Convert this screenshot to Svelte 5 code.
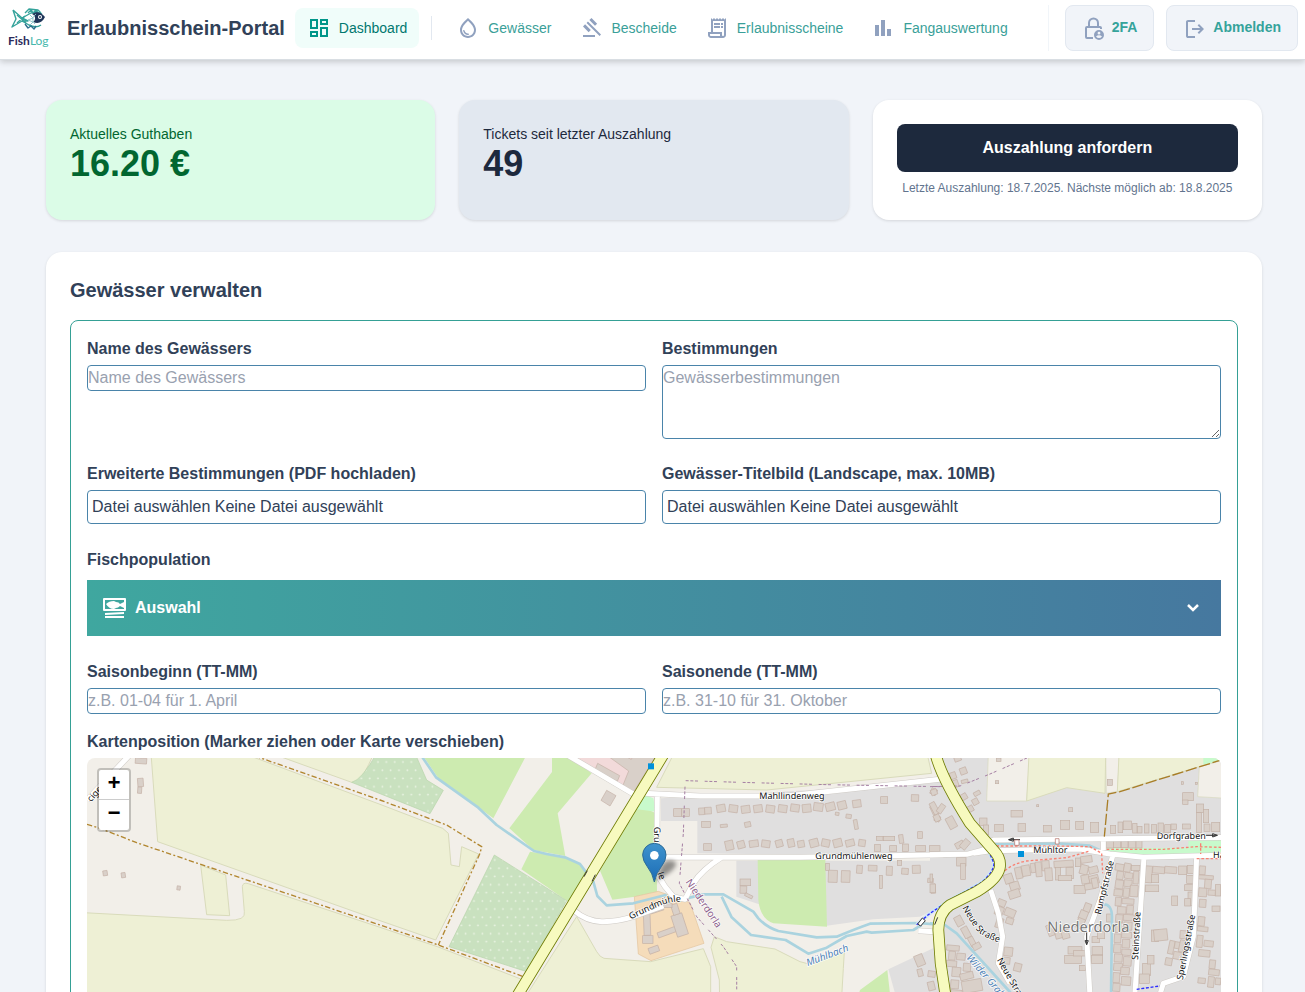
<!-- ------------------------------------------------------------
     APP.SVELTE — Erlaubnisschein-Portal, Dashboard
     Purpose: top navigation → balance cards → water body form + map
------------------------------------------------------------- -->

<script>
  const navItems = [
    {
      label: "Gewässer",
      icon: "M12 2c-5.33 4.55-8 8.48-8 11.8 0 4.98 3.8 8.2 8 8.2s8-3.22 8-8.2c0-3.32-2.67-7.25-8-11.8zm0 18c-3.35 0-6-2.57-6-6.2 0-2.34 1.95-5.44 6-9.14 4.05 3.7 6 6.79 6 9.14 0 3.63-2.65 6.2-6 6.2zm-4.17-6c.37 0 .67.26.74.62.41 2.22 2.28 2.98 3.64 2.87.43-.02.79.32.79.75 0 .4-.32.73-.72.75-2.13.13-4.62-1.09-5.19-4.12-.08-.45.28-.87.74-.87z"
    },
    {
      label: "Bescheide",
      icon: "M4 21v-2h12v2zm5.65-4.85L4 10.5l2.1-2.15L11.8 14zM16 9.8l-5.65-5.7L12.5 2l5.65 5.65zM20.6 20L7.55 6.95l1.4-1.4L22 18.6z"
    },
    {
      label: "Erlaubnisscheine",
      icon: "M19.5 3.5L18 2l-1.5 1.5L15 2l-1.5 1.5L12 2l-1.5 1.5L9 2 7.5 3.5 6 2v14H3v3c0 1.66 1.34 3 3 3h12c1.66 0 3-1.34 3-3V2l-1.5 1.5zM15 20H6c-.55 0-1-.45-1-1v-1h10v2zm4-1c0 .55-.45 1-1 1s-1-.45-1-1v-3H8V5h11v14zM9 7h6v2H9zm7 0h2v2h-2zm-7 3h6v2H9zm7 0h2v2h-2z"
    },
    {
      label: "Fangauswertung",
      icon: "M4 9h4v11H4zm12 4h4v7h-4zm-6-9h4v16h-4z"
    }
  ];

  // map sheets, west to east: offset of each one inside the drawing
  const west = "translate(-21 -24)";
  const mid = "translate(879 -24)";
  const center = "translate(1659 -24)";
  const east = "translate(2529 -24)";

  // houses: x, y, width, height, rotation
  const housesWest = [
    [166, 24, 34, 17, 4], [173, 85, 17, 25, -4], [173, 111, 12, 19, 4],
    [69, 362, 13, 15, -8], [124, 368, 12, 15, -8], [291, 408, 10, 12, 8]
  ];

  const housesCenter = [
    [101, 176, 24, 23, 0], [125, 176, 23, 23, 0], [176, 174, 18, 20, -3], [194, 172, 20, 20, -3],
    [230, 164, 26, 22, -10], [267, 165, 26, 22, 8], [304, 167, 26, 22, -8], [341, 165, 26, 22, -8],
    [378, 166, 26, 22, 8], [415, 165, 26, 22, 8], [452, 163, 26, 22, 8], [487, 163, 26, 24, -6],
    [521, 159, 28, 24, 8], [557, 158, 28, 24, -14], [593, 154, 26, 24, -14], [638, 150, 25, 22, -8],
    [722, 140, 21, 20, 0], [814, 134, 22, 20, 2], [872, 116, 18, 18, 25], [874, 166, 16, 28, -25],
    [884, 198, 16, 16, 20], [185, 214, 26, 18, 0], [241, 223, 21, 9, -5], [314, 216, 18, 15, -12],
    [586, 187, 11, 9, 10], [618, 193, 16, 12, 8], [642, 209, 11, 29, -10], [191, 281, 23, 20, 0],
    [256, 272, 24, 28, -12], [292, 273, 22, 22, -15], [328, 271, 27, 20, -8], [365, 271, 25, 21, 8],
    [407, 270, 21, 21, -15], [443, 267, 20, 24, -12], [473, 272, 20, 20, -10], [509, 267, 26, 24, -15],
    [545, 268, 24, 22, 12], [580, 267, 26, 24, -14], [617, 269, 26, 20, -14], [656, 269, 20, 20, 8],
    [709, 259, 20, 12, 0], [730, 259, 34, 13, 0], [777, 254, 13, 26, -8], [833, 245, 14, 20, 0],
    [703, 284, 19, 20, 0], [749, 287, 21, 17, 0], [787, 282, 18, 22, 0], [827, 287, 30, 17, 0],
    [868, 287, 32, 17, 0], [557, 340, 11, 21, 0], [565, 361, 27, 36, 2], [604, 362, 26, 35, 2],
    [650, 346, 17, 24, 4], [685, 346, 26, 17, 2], [739, 349, 18, 27, 2], [772, 331, 13, 15, 0],
    [785, 355, 20, 18, 4], [817, 346, 24, 24, -2], [718, 376, 9, 39, 0], [863, 385, 17, 13, 4],
    [872, 402, 14, 28, -4], [300, 387, 32, 20, 0], [300, 408, 20, 22, 2], [314, 433, 24, 9, 26],
    [826, 614, 26, 34, -22], [833, 657, 15, 22, -14], [864, 663, 22, 18, 8], [864, 695, 20, 26, -14],
    [11, 480, 20, 76, -2], [8, 557, 31, 23, 0], [26, 590, 31, 18, -20], [52, 538, 60, 16, -20],
    [102, 492, 34, 66, -18], [96, 462, 20, 32, -18], [30, 468, 40, 18, -18], [64, 459, 32, 14, 0]
  ];

  const housesEast = [
    [60, 67, 18, 20, -20], [90, 53, 20, 20, -20], [63, 91, 22, 22, -20], [94, 89, 20, 10, -14],
    [72, 14, 20, 20, -20], [3, 118, 18, 17, -20], [93, 131, 18, 18, -30],
    [131, 124, 20, 12, -28], [127, 146, 18, 18, -28], [110, 168, 20, 18, -28], [5, 156, 17, 38, -28],
    [25, 162, 16, 28, 35], [12, 194, 18, 20, -25], [52, 200, 24, 36, -28], [149, 204, 22, 22, 0],
    [160, 225, 16, 30, 0], [194, 223, 26, 22, 0], [243, 181, 34, 20, 0], [264, 221, 23, 23, 0],
    [320, 164, 6, 6, 0], [340, 226, 24, 20, 0], [391, 211, 28, 27, 0], [416, 173, 12, 12, 0],
    [437, 214, 24, 24, 0], [481, 217, 25, 30, 0], [199, 24, 14, 10, 0], [196, 92, 10, 9, 0],
    [532, 88, 15, 18, 0], [541, 226, 16, 24, 0], [564, 216, 14, 32, 0], [580, 213, 24, 26, 0],
    [608, 220, 13, 29, 0], [622, 229, 14, 20, 0], [643, 222, 14, 27, 0], [664, 224, 16, 25, 0],
    [684, 219, 16, 30, 0], [704, 224, 18, 24, 0], [723, 222, 16, 16, 0], [757, 222, 24, 15, 0],
    [758, 128, 32, 24, 0], [758, 150, 16, 13, 0], [754, 95, 6, 8, 0], [796, 97, 6, 6, 0],
    [799, 162, 22, 26, 0], [800, 188, 14, 60, 0], [820, 178, 16, 40, 0], [822, 222, 18, 22, 0],
    [845, 217, 24, 28, 0], [528, 270, 22, 24, 0], [550, 272, 22, 21, 0], [574, 272, 20, 21, 0],
    [596, 270, 22, 24, 0], [618, 270, 18, 24, 0], [76, 275, 26, 18, -28], [95, 268, 20, 30, 40],
    [80, 322, 28, 26, 0], [92, 340, 14, 48, 0], [0, 372, 8, 24, 0], [0, 402, 16, 26, 0],
    [223, 372, 26, 28, -18], [240, 396, 28, 26, -18], [236, 420, 34, 24, -18], [256, 352, 20, 34, -12],
    [276, 346, 24, 32, -10], [302, 340, 14, 28, -8], [317, 336, 18, 44, -5], [336, 332, 22, 30, -4],
    [345, 354, 22, 38, -4], [372, 332, 58, 20, -4], [376, 352, 16, 38, 0], [408, 352, 22, 34, 0],
    [385, 376, 40, 16, 0], [436, 324, 16, 26, 0], [452, 318, 34, 20, -8], [450, 345, 24, 28, 15],
    [476, 350, 28, 20, -14], [454, 375, 24, 26, -10], [478, 376, 28, 26, -14], [432, 406, 34, 24, 0],
    [464, 400, 32, 18, -10], [486, 384, 18, 30, -12], [462, 460, 20, 26, 20], [448, 482, 24, 28, 22],
    [440, 505, 22, 30, 22], [376, 545, 24, 20, -15], [395, 538, 22, 28, -15], [352, 524, 18, 34, -20],
    [556, 342, 26, 20, 10], [582, 340, 20, 26, 10], [604, 346, 26, 16, 0], [560, 364, 20, 24, 8],
    [584, 368, 24, 18, 8], [610, 364, 16, 38, 4], [556, 390, 24, 26, 8], [582, 390, 24, 20, 6],
    [552, 418, 26, 20, 6], [580, 414, 18, 28, 6], [600, 406, 24, 34, 4], [556, 442, 18, 26, 4],
    [576, 446, 36, 16, 4], [562, 470, 26, 22, 4], [590, 466, 20, 26, 4], [557, 494, 22, 22, 4],
    [580, 494, 36, 18, 4], [556, 518, 24, 30, 4], [582, 516, 24, 24, 4], [553, 552, 20, 26, 4],
    [575, 546, 30, 18, 4], [577, 568, 22, 26, 4], [551, 582, 22, 26, 4], [575, 598, 28, 18, 4],
    [553, 612, 24, 24, 4], [580, 620, 24, 28, 4], [551, 640, 26, 22, 4], [549, 668, 20, 30, 4],
    [572, 652, 26, 22, 4], [574, 680, 28, 26, 4], [548, 700, 22, 24, 4], [646, 348, 20, 50, 4],
    [668, 350, 36, 20, 4], [704, 350, 36, 20, 4], [746, 348, 24, 26, 0], [772, 346, 20, 24, 0],
    [646, 405, 40, 20, 0], [664, 374, 22, 24, 0], [770, 376, 20, 24, 0], [764, 404, 26, 18, 0],
    [774, 426, 14, 40, 0], [764, 446, 18, 22, 0], [725, 438, 18, 28, 0], [664, 540, 22, 34, 0],
    [672, 538, 40, 34, -6], [638, 640, 24, 36, 0], [628, 672, 30, 28, 0], [652, 616, 20, 26, 0],
    [716, 572, 16, 40, 12], [734, 576, 18, 20, 10], [750, 542, 22, 24, 4], [748, 570, 14, 36, 12],
    [730, 606, 26, 22, 12], [706, 624, 20, 22, 10], [808, 348, 18, 26, 4], [806, 376, 44, 12, 4],
    [824, 388, 20, 28, 4], [806, 414, 24, 26, 4], [834, 420, 22, 16, 4], [808, 448, 20, 24, 4],
    [846, 468, 24, 16, 0], [856, 404, 16, 34, 0], [804, 500, 20, 28, 6], [802, 530, 32, 14, 6],
    [800, 556, 18, 36, 6], [822, 572, 28, 18, 6], [806, 600, 34, 20, 6], [838, 630, 18, 26, 6],
    [836, 658, 32, 18, 6], [834, 680, 18, 32, 6], [804, 684, 22, 16, 6], [856, 684, 16, 20, 6],
    [203, 449, 24, 20, 22], [196, 470, 24, 26, 22], [224, 476, 32, 24, 22], [198, 504, 20, 30, 18],
    [228, 504, 22, 18, 18], [222, 592, 26, 26, 6], [216, 622, 24, 20, 6], [252, 640, 22, 24, 14],
    [76, 498, 22, 30, -28], [98, 530, 20, 34, -28], [118, 560, 16, 30, -28], [128, 580, 24, 18, -28],
    [50, 586, 38, 16, 5], [56, 604, 20, 26, 5], [80, 610, 26, 20, 5], [48, 632, 32, 18, 5],
    [66, 652, 26, 28, 5], [100, 640, 22, 24, 5], [90, 668, 40, 20, -14], [96, 690, 60, 36, -10],
    [62, 690, 24, 26, 5], [62, 720, 34, 20, 5], [414, 590, 42, 22, 0], [404, 616, 50, 24, 0],
    [430, 602, 36, 16, 0], [486, 590, 32, 24, 0], [484, 616, 34, 24, 0], [448, 646, 18, 16, 0],
    [486, 560, 22, 18, 0], [502, 544, 22, 22, 0], [530, 492, 14, 24, 0]
  ];

  let species = false;

  // file pickers show the chosen name beside the button text
  let pdfName = "Keine Datei ausgewählt";
  let imageName = "Keine Datei ausgewählt";

  function pickedName(e) {
    return e.target.files[0]?.name ?? "Keine Datei ausgewählt";
  }
</script>

{#snippet houses(list)}
  {#each list as [x, y, w, h, r]}
    <rect {x} {y} width={w} height={h} transform={`rotate(${r} ${x + w / 2} ${y + h / 2})`} />
  {/each}
{/snippet}

<header class="topbar">
  <a class="logo" href="#home" aria-label="FishLog">
    <svg viewBox="0 0 44 46">
      <g fill="none" stroke="#35a39b" stroke-width="1.4" stroke-linejoin="round">
        <path d="M5 5l9 8 9-5c4-1 8-1 11 1M5 5l3 9-4 8 10-6 7 4c4 2 9 2 12 0" />
        <path d="M14 13l6 3-6 0M9 10l9 8M9 18l8-7" />
        <path d="M17 8l4-4 9 1 3 3M20 8l3-3 2 3 3-3 2 3" />
        <path d="M17 19l3 4 3-2 3 3 2-3" stroke="#2b6f8d" />
      </g>
      <path d="M24 9c5-3 9-2 13 3-3 6-7 7-12 5 3-2 3-6-1-8z" fill="#1f3559" />
      <path d="M28 9c-4 3-4 7-1 10M22 10l3 3-5 2 5 2-3 3" fill="none" stroke="#8ec7cb" stroke-width="1" />
      <circle cx="32" cy="12" r="2" fill="#fff" />
      <circle cx="32" cy="12" r="1" fill="#1f3559" />
      <text x="0" y="40" class="brand">Fish<tspan>Log</tspan></text>
    </svg>
  </a>
  <h1>Erlaubnisschein-Portal</h1>

  <nav>
    <a class="nav-item active" href="#dashboard">
      <svg class="icon" viewBox="0 0 24 24"><path d="M19 5v2h-4V5h4M9 5v6H5V5h4m10 8v6h-4v-6h4M9 17v2H5v-2h4M21 3h-8v6h8V3zM11 3H3v10h8V3zm10 8h-8v10h8V11zm-10 4H3v6h8v-6z" /></svg>
      Dashboard
    </a>
    <span class="separator"></span>
    {#each navItems as item}
      <a class="nav-item" href="#{item.label.toLowerCase()}">
        <svg class="icon" viewBox="0 0 24 24"><path d={item.icon} /></svg>
        {item.label}
      </a>
    {/each}
  </nav>

  <div class="account">
    <button type="button">
      <svg class="icon" viewBox="0 0 24 24">
        <path d="M6 9V6a5 5 0 0 1 11 0v3h1q2 0 2 2v1h-2v-1H5v9h6v2H5q-2 0-2-2v-9q0-2 2-2zm2 0h7V6a3 3 0 0 0-7 0z" />
        <path fill-rule="evenodd" d="M17 13a5 5 0 1 0 0 10 5 5 0 0 0 0-10zm0 1.800a1.400 1.400 0 1 1 0 2.800 1.400 1.400 0 0 1 0-2.800zm-3 4.700q1.200-1.200 3-1.200t3 1.200q-1.200 1.500-3 1.500t-3-1.500z" />
      </svg>2FA
    </button>
    <button type="button">
      <svg class="icon" viewBox="0 0 24 24"><path d="M5 21q-.825 0-1.413-.587T3 19V5q0-.825.588-1.412T5 3h7v2H5v14h7v2zm11-4l-1.375-1.450l2.550-2.550H9v-2h8.175l-2.550-2.550L16 7l5 5z" /></svg>Abmelden
    </button>
  </div>
</header>

<main>
  <div class="cards">
    <div class="card balance">
      <p>Aktuelles Guthaben</p>
      <strong>16.20 €</strong>
    </div>
    <div class="card tickets">
      <p>Tickets seit letzter Auszahlung</p>
      <strong>49</strong>
    </div>
    <div class="card payout">
      <button type="button">Auszahlung anfordern</button>
      <small>Letzte Auszahlung: 18.7.2025. Nächste möglich ab: 18.8.2025</small>
    </div>
  </div>

  <section class="panel">
    <h2>Gewässer verwalten</h2>

    <form>
      <div class="row">
        <div class="field">
          <label for="name">Name des Gewässers</label>
          <input id="name" type="text" placeholder="Name des Gewässers" />
        </div>
        <div class="field">
          <label for="rules">Bestimmungen</label>
          <textarea id="rules" rows="3" placeholder="Gewässerbestimmungen"></textarea>
        </div>
      </div>

      <div class="row spaced">
        <div class="field">
          <label for="pdf">Erweiterte Bestimmungen (PDF hochladen)</label>
          <div class="file">
            <span>Datei auswählen {pdfName}</span>
            <input id="pdf" type="file" accept="application/pdf" on:change={(e) => (pdfName = pickedName(e))} />
          </div>
        </div>
        <div class="field">
          <label for="image">Gewässer-Titelbild (Landscape, max. 10MB)</label>
          <div class="file">
            <span>Datei auswählen {imageName}</span>
            <input id="image" type="file" accept="image/*" on:change={(e) => (imageName = pickedName(e))} />
          </div>
        </div>
      </div>

      <div class="field spaced">
        <label for="species">Fischpopulation</label>
        <button id="species" class="species" type="button" aria-expanded={species} on:click={() => (species = !species)}>
          <svg class="fish" viewBox="0 0 24 20">
            <path fill-rule="evenodd" d="M2 0h20q1 0 1 1v11q0 1-1 1H1q-1 0-1-1V1q0-1 1-1zm0 2v9h19V2z" />
            <path d="M3 6q3-3 8-3l2 1q3 0 4 2l4-2v6l-4-2q-2 2-4 2l-2 1q-5 0-8-5z" />
            <path d="M2 15l19-1v2l-19 1zM2 18h19v2H2z" />
          </svg>
          Auswahl
          <svg class="chevron" viewBox="0 0 14 10"><path d="M2 2l5 5 5-5" /></svg>
        </button>
      </div>

      <div class="row">
        <div class="field">
          <label for="start">Saisonbeginn (TT-MM)</label>
          <input id="start" type="text" placeholder="z.B. 01-04 für 1. April" />
        </div>
        <div class="field">
          <label for="end">Saisonende (TT-MM)</label>
          <input id="end" type="text" placeholder="z.B. 31-10 für 31. Oktober" />
        </div>
      </div>

      <div class="field">
        <span class="label">Kartenposition (Marker ziehen oder Karte verschieben)</span>
        <div class="map">
          <svg class="sheet" viewBox="0 0 3402 960" preserveAspectRatio="xMinYMin slice">
            <defs>
              <pattern id="dots" width="25" height="49" patternUnits="userSpaceOnUse">
                <rect width="25" height="49" fill="#c9e1bf" />
                <path d="M4 12h6M7 9v6M16 36h6M19 33v6" stroke="#f0f6e8" stroke-width="2" />
              </pattern>
              <linearGradient id="pin" x2="0" y2="1">
                <stop offset="0" stop-color="#3f93ce" />
                <stop offset="1" stop-color="#1b6cb5" />
              </linearGradient>
              <filter id="soft"><feGaussianBlur stdDeviation="6" /></filter>
              <path id="way-mill" d="M752 509Q800 485 840 468T910 457" />
              <path id="way-new" d="M97 473Q130 535 150 550T214 580" />
            </defs>

            <!-- land use -->
            <g transform={west}>
              <path class="farm" d="M213 10L233 275 900 512 1067 570 1196 312 1145 290 1138 350 1113 345 1105 250 1088 235 900 163 500 14z" />
              <path class="farm" d="M590 16L815 97 835 95Q850 80 880 14z" />
              <path class="farm" d="M362 345l75 30 12 122-69-3z" />
              <path class="farm" d="M10 488L440 511Q500 512 493 485L487 410Q488 396 505 401L900 532 1072 590 1330 690 1290 760 1200 1000H10z" />
              <path class="orchard" fill="url(#dots)" d="M890 10Q845 90 815 97L1050 191l40-70-50-31-35-80z" />
            </g>
            <g transform={mid}>
              <path class="grass" d="M127 14H440L340 205 175 85zM516 14h44l75 56L533 190l23 128-96-18-72-65L516 66zM450 305l106 17 44 20 17 25-52 88-141-97zM660 362L775 165l53 25 3 235-66 15-68 9z" />
              <path class="orchard" fill="url(#dots)" d="M343 315L560 452 440 665 207 590z" />
              <path class="farm" d="M590 500L650 605Q660 622 672 625L812 635 970 596 992 650 992 1000H270z" />
              <path d="M560 14L760 130 835 10z" fill="#f2dada" />
              <path d="M790 133l30 12 8 40-62-8z" fill="#c8facc" />
              <g class="house">
                <path d="M653 40l66 37-7 17-67-35zM678 14l68 49-20 50 32 18L830 14H760l-6 14-20-10z" />
                <path d="M680 121l28 16-18 31-27-17z" />
              </g>
            </g>
            <g transform={center}>
              <path class="farm" d="M100 14L50 112 380 120 875 70 862 14zM213 592l10-32L260 575 405 597 480 635 510 643 613 605 610 655 590 1000H242L238 690z" />
              <path class="town" d="M63 145L880 100 900 320 172 310V213H63zM289 332H900V470L840 500 700 508 560 527 355 462 289 440zM745 658L900 585V1000H840z" />
              <path class="grass" d="M353 330H556L561 530 400 520Q360 505 355 450zM742 660L780 1000H580L660 720z" />
              <path d="M-17 440L55 424 150 458 192 580 33 632-5 612z" fill="#f5dcba" stroke="#e2c29b" stroke-width="2" />
            </g>
            <g transform={east}>
              <path class="town" d="M20 14H900V1000H10V560L40 490 0 470V95L30 90z" />
              <path d="M175 14H300L290 153H170zM527 14h42l-7 110-33 6zM808 50l80-22V145l-85-5z" fill="#f2efe9" stroke="#d8d9bd" stroke-width="2" />
              <path class="farm" d="M297 14H527L525 130 410 113 290 153zM567 14H880V28L562 125z" />
              <path d="M525 295L775 293V270L890 258V308L640 325 545 310zM820 14h60v16l-60 14z" fill="#c8facc" />
            </g>

            <!-- houses -->
            <g class="house">
              <g transform={west}>{@render houses(housesWest)}</g>
              <g transform={center}>{@render houses(housesCenter)}</g>
              <g transform={east}>{@render houses(housesEast)}</g>
            </g>

            <!-- streams -->
            <g class="water">
              <path transform={mid} d="M122 14L168 82 295 173 350 225 462 303 500 312 555 322 600 342 617 365 640 395 652 438 680 466 760 460 860 434" />
              <path transform={center} d="M140 445L190 433H250L340 485 355 505Q380 532 415 543L530 562 590 560Q650 535 690 521L830 519 890 523M245 440L275 502 333 555 437 570 505 611 560 593 620 558 680 545 695 548 820 540 845 525" />
              <path transform={east} d="M0 520L45 525 80 550 240 726 400 920M540 990L546 500Q545 462 520 463M185 282L380 280 480 287 530 310" />
            </g>

            <!-- minor streets: casing first, then surface -->
            {#each ["casing", "street"] as kind}
              <g class={kind}>
                <path transform={west} d="M21 150L150 14" />
                <path transform={mid} d="M560 14L760 132M582 482Q620 514 665 515T760 500L850 468" />
                <path transform={center} d="M10 130L180 138H440L900 88M52 140L50 370 75 410 100 440 135 448 160 400Q185 360 245 322M50 322H480L910 314M835 542L890 546" />
                <path transform={east} d="M0 314L110 313 160 300 190 270 900 262M130 310L180 302 450 297 540 312 640 322 900 315M520 262V300M548 318L510 450 470 560 480 740V990M642 320L615 726 600 990M800 320L790 560 760 680 700 700 685 750M182 420L205 490 218 560 205 640 240 700" />
              </g>
            {/each}

            <!-- tracks, paths and boundary -->
            <g fill="none">
              <g class="track">
                <path transform={west} d="M21 223L60 235 170 278 900 525 1075 585 1330 680M525 18L900 150 1100 225 1205 290 1200 310 1075 585" />
              </g>
              <path transform={east} d="M880 28L570 125 535 132 523 260" stroke="#a87d26" stroke-width="4" stroke-dasharray="34 8" />
              <g stroke="#a57fa3" stroke-width="3" stroke-dasharray="9 5 9 5 9 20">
                <path transform={center} d="M137 92L300 97 560 104 900 110M135 110L130 250 118 400 170 500 250 590 290 650 291 990" />
                <path transform={east} d="M0 110L90 108 180 72 300 20" />
              </g>
              <path transform={east} d="M185 288H380L480 290 515 310 518 370M225 362Q250 340 290 333L410 323 480 303M530 298H700L800 290 873 292M800 326H873M812 280V312" stroke="#fa8072" stroke-width="4" stroke-dasharray="8 6" />
              <path transform={east} d="M-40 524L0 490 60 450 150 400Q190 370 192 340L178 308" stroke="#cfe6f5" stroke-width="11" />
              <path transform={east} d="M-40 524L0 490 60 450 150 400Q190 370 192 340L178 308M620 718L690 708" stroke="#2b2bff" stroke-width="4" stroke-dasharray="9 5" />
            </g>

            <!-- main roads -->
            {#each [["#707d05", 35], ["#f7fabf", 30]] as [stroke, width]}
              <g fill="none" {stroke} stroke-width={width}>
                <path transform={mid} d="M850 14L415 732 250 1004" />
                <path transform={east} d="M17 14Q35 85 120 220L190 300Q215 325 209 355 200 390 140 425L60 465Q25 490 25 540L32 640 50 760 70 1000" />
              </g>
            {/each}

            <!-- bridges, arrows, bus stops -->
            <g stroke="#333" stroke-width="3" fill="#fff">
              <path transform={mid} d="M612 380l10-18M636 394l10-20" />
              <path transform={center} d="M833 522l14-18 9 8-14 16zM884 524l9-22" />
              <path transform={east} d="M236 269h34M236 269l14-5v10zM828 256h34M862 256l-14-5v10zM470 546v38M470 584l-5-12h10z" />
              <path transform={east} d="M254 270h13v16h-13zM376 266h11v16h-11z" stroke="#b06a60" stroke-width="2" />
            </g>
            <g fill="#0092da">
              <rect x="1683" y="16" width="18" height="18" />
              <rect x="2793" y="279" width="18" height="18" />
            </g>

            <!-- names -->
            <g class="names">
              <text transform={`${west} translate(33 157) rotate(-48)`}>cige</text>
              <g transform={mid}>
                <text><textPath href="#way-mill">Grundmühle</textPath></text>
              </g>
              <g transform={center}>
                <text x="358" y="148">Mahllindenweg</text>
                <text x="526" y="327">Grundmühlenweg</text>
                <text transform="translate(42 230) rotate(90)">Gru</text>
                <text transform="translate(52 370) rotate(70)">le</text>
                <text class="creek" transform="translate(503 649) rotate(-21)">Mühlbach</text>
                <text class="district" transform="translate(136 396) rotate(56)">Niederdorla</text>
              </g>
              <g transform={east}>
                <text x="310" y="309">Mühltor</text>
                <text x="680" y="268">Dorfgraben</text>
                <text x="849" y="323">Ha</text>
                <text transform="translate(512 495) rotate(-76)">Rumpfstraße</text>
                <text transform="translate(624 630) rotate(-87)">Steinstraße</text>
                <text transform="translate(758 691) rotate(-79)">Sperlingsstraße</text>
                <text><textPath href="#way-new">Neue Straße</textPath></text>
                <text transform="translate(200 630) rotate(60)">Neue Straße</text>
                <text class="creek" transform="translate(108 624) rotate(49)">Wilder Graben</text>
                <text class="village" x="352" y="547">Niederdorla</text>
              </g>
            </g>

            <!-- marker -->
            <g transform={center}>
              <path d="M45 396L62 350Q75 325 98 332T92 365z" fill="#000" opacity=".4" filter="url(#soft)" />
              <path d="M43 396Q38 370 22 350 8 332 8 315A35 35 0 0 1 78 315Q78 332 64 350 48 370 43 396z" fill="url(#pin)" stroke="#2e6c97" stroke-width="3" />
              <circle cx="43" cy="316" r="13" fill="#fff" />
            </g>
          </svg>

          <div class="zoom">
            <button type="button" aria-label="Vergrößern"><span>+</span></button>
            <button type="button" aria-label="Verkleinern"><span>−</span></button>
          </div>
        </div>
      </div>
    </form>
  </section>
</main>

<style>
  :global(body) {
    margin: 0;
    background: #f1f4f9;
    color: #314158;
    font-family: "Liberation Sans", Arial, sans-serif;
    font-size: 16px;
    line-height: 24px;
  }

  h1, h2, p {
    margin: 0;
  }

  a {
    color: inherit;
    text-decoration: none;
  }

  button, input, textarea {
    font: inherit;
    box-sizing: border-box;
  }

  button {
    cursor: pointer;
  }

  /* top bar */
  .topbar {
    display: flex;
    align-items: center;
    padding: 5px 7px 8px 8px;
    background: #fff;
    border-bottom: 1px solid #d9dee3;
    box-shadow: 0 2px 6px rgba(0, 0, 0, 0.18);
    white-space: nowrap;
  }

  .logo svg {
    display: block;
    width: 44px;
    height: 46px;
  }

  .brand {
    font: bold 12px Lato, sans-serif;
    fill: #2b2b5b;
  }

  .brand tspan {
    fill: #45b8ac;
    font-weight: normal;
  }

  h1 {
    margin: 0 10px 0 15px;
    font-size: 20px;
    line-height: 28px;
  }

  nav {
    display: flex;
    align-items: center;
    gap: 4px;
    flex: 1;
  }

  .nav-item {
    display: flex;
    align-items: center;
    gap: 8px;
    padding: 8px 12px;
    border-radius: 8px;
    font-size: 14px;
    color: #3a9f99;
  }

  .nav-item.active {
    background: #f0fdfa;
    color: #00786f;
  }

  .icon {
    width: 24px;
    height: 24px;
    fill: #90a1bf;
  }

  .active .icon {
    fill: #009689;
  }

  .separator {
    width: 1px;
    height: 24px;
    margin: 0 8px;
    background: #e2e8f0;
  }

  .account {
    display: flex;
    gap: 12px;
    padding-left: 16px;
    border-left: 1px solid #f1f5f9;
  }

  .account button {
    height: 46px;
    padding: 0 16px;
    border: 1px solid #e2e8f0;
    border-radius: 8px;
    background: #f1f4f9;
    color: #35a39b;
    font-size: 14px;
    font-weight: bold;
  }

  .account .icon {
    margin-right: 6px;
    vertical-align: middle;
  }

  /* content */
  main {
    display: flex;
    flex-direction: column;
    gap: 32px;
    padding: 40px 43px 40px 46px;
  }

  .cards {
    display: grid;
    grid-template-columns: repeat(3, 1fr);
    gap: 24px;
  }

  .card, .panel {
    padding: 24px;
    border-radius: 16px;
    background: #fff;
    box-shadow: 0 1px 3px rgba(0, 0, 0, 0.12);
  }

  .card p {
    font-size: 14px;
    line-height: 20px;
  }

  .card strong {
    display: block;
    font-size: 36px;
    line-height: 40px;
  }

  .balance {
    background: #dbfce7;
    color: #016630;
  }

  .tickets {
    background: #e2e8f0;
    color: #1d293d;
  }

  .payout {
    text-align: center;
  }

  .payout button {
    display: block;
    width: 100%;
    height: 48px;
    border: 0;
    border-radius: 8px;
    background: #1d293d;
    color: #fff;
    font-weight: bold;
  }

  .payout small {
    display: block;
    margin-top: 8px;
    font-size: 12px;
    line-height: 16px;
    color: #62748e;
  }

  h2 {
    margin-bottom: 16px;
    font-size: 20px;
    line-height: 28px;
  }

  form {
    display: flex;
    flex-direction: column;
    gap: 16px;
    padding: 16px;
    border: 1px solid #35a095;
    border-radius: 8px;
  }

  .row {
    display: grid;
    grid-template-columns: 1fr 1fr;
    gap: 16px;
  }

  .spaced {
    margin-bottom: 8px;
  }

  .field label, .label {
    display: block;
    margin-bottom: 4px;
    font-weight: bold;
    line-height: 24px;
  }

  .field input[type="text"], textarea {
    width: 100%;
    padding: 0;
    border: 1px solid #4a84aa;
    border-radius: 4px;
    background: #fff;
    color: inherit;
  }

  .field input[type="text"] {
    display: block;
    height: 26px;
  }

  ::placeholder {
    color: #99a1af;
  }

  .file {
    position: relative;
    padding: 4px;
    border: 1px solid #4a84aa;
    border-radius: 4px;
  }

  /* picker covers the box, the span carries the text */
  .file input {
    position: absolute;
    inset: 0;
    width: 100%;
    opacity: 0;
  }

  .species {
    display: flex;
    align-items: center;
    gap: 8px;
    width: 100%;
    margin-top: 8px;
    padding: 16px;
    border: 0;
    background: linear-gradient(90deg, #3fa79f, #46789f);
    color: #fff;
    font-weight: bold;
  }

  .fish {
    width: 24px;
    height: 20px;
    fill: #fff;
  }

  .chevron {
    width: 14px;
    height: 10px;
    margin: 0 5px 0 auto;
    fill: none;
    stroke: #fff;
    stroke-width: 2.5;
  }

  /* map */
  .map {
    position: relative;
    height: 320px;
    overflow: hidden;
    border-radius: 8px;
    background: #f2efe9;
  }

  .sheet {
    display: block;
    width: 100%;
    height: 100%;
  }

  .farm {
    fill: #eef0d5;
    stroke: #d9dbbb;
    stroke-width: 3;
  }

  .orchard {
    stroke: #b7d3a9;
    stroke-width: 2;
  }

  .grass {
    fill: #cdebb0;
  }

  .town {
    fill: #e0dfdf;
  }

  .house {
    fill: #d9d0c9;
    stroke: #c4b1a6;
    stroke-width: 2;
  }

  .water {
    fill: none;
    stroke: #aad3df;
    stroke-width: 8;
    stroke-linejoin: round;
  }

  .casing, .street {
    fill: none;
    stroke: #cfcbc6;
    stroke-width: 18;
    stroke-linejoin: round;
  }

  .street {
    stroke: #fff;
    stroke-width: 15;
  }

  .track {
    stroke: #b1862f;
    stroke-width: 4;
    stroke-dasharray: 16 7 6 7;
  }

  .names {
    font-family: "Noto Sans", sans-serif;
    font-size: 27px;
    fill: #111;
    stroke: #fff;
    stroke-width: 4;
    stroke-linejoin: round;
    paint-order: stroke;
    text-rendering: geometricPrecision;
  }

  .creek {
    font-size: 30px;
    font-style: italic;
    fill: #4d80b3;
  }

  .district {
    font-size: 30px;
    fill: #8d618b;
  }

  .village {
    font-size: 44px;
    fill: #777;
  }

  .zoom {
    position: absolute;
    top: 10px;
    left: 10px;
    border: 2px solid rgba(0, 0, 0, 0.2);
    border-radius: 4px;
    background: #fff;
    background-clip: padding-box;
  }

  .zoom button {
    display: block;
    width: 30px;
    height: 30px;
    padding: 0;
    border: 0;
    background: none;
    color: #000;
    font: bold 22px "Liberation Mono", monospace;
    line-height: 28px;
  }

  .zoom button:first-child {
    border-bottom: 1px solid #ccc;
  }
</style>
